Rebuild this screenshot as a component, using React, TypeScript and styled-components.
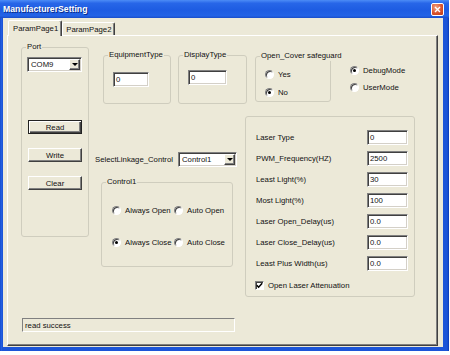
import React from 'react';
import styled, { createGlobalStyle } from 'styled-components';

const Global = createGlobalStyle`
  html, body { margin: 0; padding: 0; background: #ffffff; }
  body { font-family: "Liberation Sans", Arial, sans-serif; font-size: 7.75px; color: #111; }
  * { box-sizing: border-box; }
`;

const FACE = '#ECE9D8';

const Window = styled.div`
  width: 449px;
  height: 351px;
  display: flex;
  flex-direction: column;
  background: linear-gradient(to right, #0A3FC0, #2A66E8 1px, #1C55D8 2px, #1C55D8 calc(100% - 2px), #0A3AB5);
`;

const TitleBar = styled.div`
  height: 18px;
  flex-shrink: 0;
  display: flex;
  align-items: center;
  justify-content: space-between;
  padding: 0 5px 0 3px;
  background: linear-gradient(#4C8CF6 0%, #2766E8 18%, #1E5CE2 55%, #2363E6 88%, #1A4DC8 100%);
`;

const Title = styled.span`
  color: #fff;
  font-weight: bold;
  font-size: 8.7px;
  text-shadow: 1px 1px 0 #0A2C8A;
`;

const CloseBtn = styled.span`
  width: 13px;
  height: 13px;
  border: 1px solid #fff;
  border-radius: 2px;
  background: radial-gradient(circle at 35% 30%, #F0A080, #D8502A 60%, #B83A18);
  display: flex;
  align-items: center;
  justify-content: center;
`;

const Client = styled.div`
  flex: 1;
  margin: 0 6px 4px 3px;
  background: ${FACE};
  padding: 2px 5px 1px 4px;
  display: flex;
  flex-direction: column;
`;

const TabStrip = styled.div`
  height: 15px;
  display: flex;
  align-items: flex-end;
  padding-left: 1px;
  position: relative;
  z-index: 1;
`;

const Tab = styled.div<{ $active?: boolean }>`
  height: ${(p) => (p.$active ? 16 : 13)}px;
  margin-bottom: ${(p) => (p.$active ? -1 : 0)}px;
  padding: ${(p) => (p.$active ? '0 3px 1px 4px' : '0 2px 0 3px')};
  background: ${FACE};
  border-left: 1px solid #fff;
  border-top: 1px solid #fff;
  border-right: 1px solid #404040;
  box-shadow: inset -1px 0 0 #808080;
  border-radius: 2px 2px 0 0;
  display: flex;
  align-items: center;
  white-space: nowrap;
`;

const Panel = styled.div`
  flex: 1;
  border: 1px solid;
  border-color: #fff #404040 #404040 #fff;
  box-shadow: inset -1px -1px 0 #808080;
  padding: 11px 0 0 13px;
  display: flex;
  flex-direction: column;
`;

const MainRow = styled.div`
  display: flex;
  align-items: flex-start;
`;

const Group = styled.div<{ $w: number; $h: number }>`
  width: ${(p) => p.$w}px;
  height: ${(p) => p.$h}px;
  flex-shrink: 0;
  border: 1px solid #CFCDBE;
  border-radius: 3px;
`;

const Legend = styled.div`
  width: max-content;
  height: 10px;
  line-height: 10px;
  margin: -6px 0 -4px 4px;
  padding: 0 1px;
  background: ${FACE};
  white-space: nowrap;
`;

const Field = styled.div<{ $w: number }>`
  width: ${(p) => p.$w}px;
  height: 15px;
  flex-shrink: 0;
  background: #fff;
  border: 1px solid;
  border-color: #808080 #fff #fff #808080;
  box-shadow: inset 1px 1px 0 #404040, inset -1px -1px 0 #D4D0C8;
  padding-left: 2px;
  display: flex;
  align-items: center;
`;

const Combo = styled.div<{ $w: number }>`
  width: ${(p) => p.$w}px;
  height: 15px;
  flex-shrink: 0;
  background: #fff;
  border: 1px solid;
  border-color: #808080 #fff #fff #808080;
  box-shadow: inset 1px 1px 0 #404040, inset -1px -1px 0 #D4D0C8;
  padding: 1px 1px 1px 2px;
  display: flex;
  align-items: stretch;
`;

const ComboText = styled.span`
  flex: 1;
  display: flex;
  align-items: center;
  padding-left: 1px;
`;

const ComboButton = styled.span`
  width: 11px;
  background: ${FACE};
  border: 1px solid;
  border-color: #fff #404040 #404040 #fff;
  box-shadow: inset -1px -1px 0 #808080;
  display: flex;
  align-items: center;
  justify-content: center;
  &::after {
    content: '';
    border-left: 3px solid transparent;
    border-right: 3px solid transparent;
    border-top: 3px solid #000;
  }
`;

const Button = styled.button<{ $default?: boolean }>`
  width: 54px;
  height: 14px;
  padding: 0;
  font: inherit;
  color: #111;
  background: ${FACE};
  border: 1px solid;
  border-color: ${(p) => (p.$default ? '#222' : '#fff #404040 #404040 #fff')};
  box-shadow: ${(p) =>
    p.$default
      ? 'inset 1px 1px 0 #fff, inset -1px -1px 0 #404040, inset -2px -2px 0 #808080'
      : 'inset -1px -1px 0 #808080'};
  display: flex;
  align-items: center;
  justify-content: center;
`;

const RadioDot = styled.span<{ $checked?: boolean }>`
  width: 9px;
  height: 9px;
  flex-shrink: 0;
  border-radius: 50%;
  background: #fff;
  border: 1px solid;
  border-color: #808080 #fff #fff #808080;
  box-shadow: inset 1px 1px 0 #404040;
  display: flex;
  align-items: center;
  justify-content: center;
  &::after {
    content: '';
    width: 3px;
    height: 3px;
    border-radius: 50%;
    background: ${(p) => (p.$checked ? '#000' : 'transparent')};
  }
`;

const RadioItem = styled.label`
  display: flex;
  align-items: center;
  gap: 4px;
  height: 10px;
  white-space: nowrap;
`;

const PortBody = styled.div`
  padding: 9px 0 0 5px;
  display: flex;
  flex-direction: column;
  align-items: flex-start;
`;

const PortButtons = styled.div`
  margin: 48px 0 0 1px;
  display: flex;
  flex-direction: column;
  gap: 14px;
`;

const RightCol = styled.div`
  margin: 8px 0 0 6px;
  display: flex;
  flex-direction: column;
`;

const TopRow = styled.div`
  display: flex;
  align-items: flex-start;
  gap: 7px;
  padding-left: 8px;
`;

const CoverGroupWrap = styled.div`
  margin: 1px 0 0 1px;
`;

const TypeBody = styled.div<{ $pt: number }>`
  padding: ${(p) => p.$pt}px 0 0 9px;
`;

const CoverBody = styled.div`
  padding: 12px 0 0 9px;
  display: flex;
  flex-direction: column;
  gap: 8px;
`;

const ModeCol = styled.div`
  margin: 10px 0 0 12px;
  display: flex;
  flex-direction: column;
  gap: 7px;
`;

const BottomRow = styled.div`
  margin-top: 12px;
  display: flex;
  align-items: flex-start;
`;

const LinkageCol = styled.div`
  width: 142px;
  margin-top: 36px;
  display: flex;
  flex-direction: column;
  align-items: flex-start;
`;

const SelectRow = styled.div`
  width: 100%;
  height: 15px;
  display: flex;
  align-items: center;
  justify-content: space-between;
  white-space: nowrap;
`;

const ControlWrap = styled.div`
  margin: 15px 0 0 6px;
`;

const ControlGrid = styled.div`
  padding: 22px 0 0 10px;
  display: grid;
  grid-template-columns: 62px auto;
  row-gap: 22px;
`;

const LaserWrap = styled.div`
  margin-left: 8px;
`;

const LaserBody = styled.div`
  padding: 13px 6px 0 10px;
  display: flex;
  flex-direction: column;
  gap: 6px;
`;

const LaserRow = styled.div`
  height: 15px;
  display: flex;
  align-items: center;
  justify-content: space-between;
  white-space: nowrap;
`;

const CheckRow = styled.label`
  margin: 3px 0 0 -1px;
  height: 10px;
  display: flex;
  align-items: center;
  gap: 4px;
`;

const CheckBox = styled.span`
  width: 9px;
  height: 9px;
  background: #fff;
  border: 1px solid;
  border-color: #808080 #fff #fff #808080;
  box-shadow: inset 1px 1px 0 #404040;
  display: flex;
  align-items: center;
  justify-content: center;
`;

const StatusBar = styled.div`
  margin: 21px 0 0 1px;
  width: 213px;
  height: 14px;
  border: 1px solid;
  border-color: #808080 #fff #fff #808080;
  padding-left: 2px;
  display: flex;
  align-items: center;
`;

const laserRows: [string, string][] = [
  ['Laser Type', '0'],
  ['PWM_Frequency(HZ)', '2500'],
  ['Least Light(%)', '30'],
  ['Most Light(%)', '100'],
  ['Laser Open_Delay(us)', '0.0'],
  ['Laser Close_Delay(us)', '0.0'],
  ['Least Plus Width(us)', '0.0'],
];

export default function App() {
  return (
    <>
      <Global />
      <Window>
        <TitleBar>
          <Title>ManufacturerSetting</Title>
          <CloseBtn>
            <svg width="7" height="7" viewBox="0 0 7 7">
              <path d="M1 1 L6 6 M6 1 L1 6" stroke="#fff" strokeWidth="1.4" />
            </svg>
          </CloseBtn>
        </TitleBar>
        <Client>
          <TabStrip>
            <Tab $active>ParamPage1</Tab>
            <Tab>ParamPage2</Tab>
          </TabStrip>
          <Panel>
            <MainRow>
              <Group $w={68} $h={190}>
                <Legend>Port</Legend>
                <PortBody>
                  <Combo $w={55}>
                    <ComboText>COM9</ComboText>
                    <ComboButton />
                  </Combo>
                  <PortButtons>
                    <Button $default>Read</Button>
                    <Button>Write</Button>
                    <Button>Clear</Button>
                  </PortButtons>
                </PortBody>
              </Group>
              <RightCol>
                <TopRow>
                  <Group $w={68} $h={49}>
                    <Legend>EquipmentType</Legend>
                    <TypeBody $pt={16}>
                      <Field $w={36}>0</Field>
                    </TypeBody>
                  </Group>
                  <Group $w={69} $h={49}>
                    <Legend>DisplayType</Legend>
                    <TypeBody $pt={14}>
                      <Field $w={39}>0</Field>
                    </TypeBody>
                  </Group>
                  <CoverGroupWrap>
                    <Group $w={76} $h={46}>
                      <Legend>Open_Cover safeguard</Legend>
                      <CoverBody>
                        <RadioItem><RadioDot />Yes</RadioItem>
                        <RadioItem><RadioDot $checked />No</RadioItem>
                      </CoverBody>
                    </Group>
                  </CoverGroupWrap>
                  <ModeCol>
                    <RadioItem><RadioDot $checked />DebugMode</RadioItem>
                    <RadioItem><RadioDot />UserMode</RadioItem>
                  </ModeCol>
                </TopRow>
                <BottomRow>
                  <LinkageCol>
                    <SelectRow>
                      <span>SelectLinkage_Control</span>
                      <Combo $w={59}>
                        <ComboText>Control1</ComboText>
                        <ComboButton />
                      </Combo>
                    </SelectRow>
                    <ControlWrap>
                      <Group $w={132} $h={85}>
                        <Legend>Control1</Legend>
                        <ControlGrid>
                          <RadioItem><RadioDot />Always Open</RadioItem>
                          <RadioItem><RadioDot />Auto Open</RadioItem>
                          <RadioItem><RadioDot $checked />Always Close</RadioItem>
                          <RadioItem><RadioDot />Auto Close</RadioItem>
                        </ControlGrid>
                      </Group>
                    </ControlWrap>
                  </LinkageCol>
                  <LaserWrap>
                    <Group $w={170} $h={181}>
                      <LaserBody>
                        {laserRows.map(([label, value]) => (
                          <LaserRow key={label}>
                            <span>{label}</span>
                            <Field $w={41}>{value}</Field>
                          </LaserRow>
                        ))}
                        <CheckRow>
                          <CheckBox>
                            <svg width="7" height="7" viewBox="0 0 7 7">
                              <path d="M0.8 3.2 L2.6 5.2 L6.2 1.2" stroke="#000" strokeWidth="1.5" fill="none" />
                            </svg>
                          </CheckBox>
                          Open Laser Attenuation
                        </CheckRow>
                      </LaserBody>
                    </Group>
                  </LaserWrap>
                </BottomRow>
              </RightCol>
            </MainRow>
            <StatusBar>read success</StatusBar>
          </Panel>
        </Client>
      </Window>
    </>
  );
}
